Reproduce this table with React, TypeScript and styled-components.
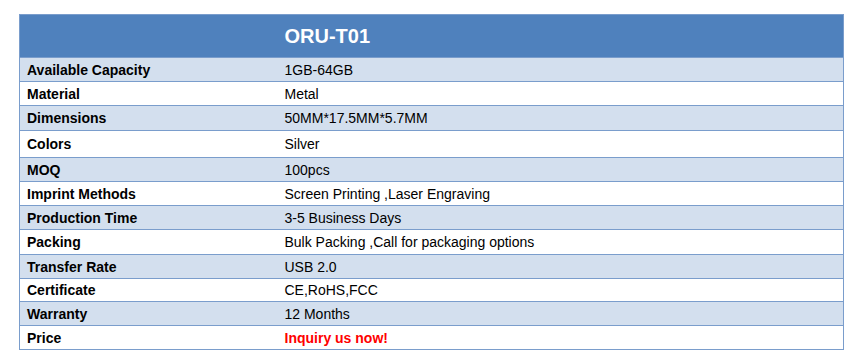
import React from 'react';
import styled, { createGlobalStyle } from 'styled-components';

const GlobalStyle = createGlobalStyle`
  body {
    margin: 0;
    background: #ffffff;
    font-family: "Liberation Sans", Arial, sans-serif;
  }
`;

const Page = styled.div`
  padding: 14px 0 0 19px;
`;

const SpecTable = styled.table`
  width: 825px;
  border-collapse: collapse;
  table-layout: fixed;
  font-size: 14px;
  color: #000;
`;

const HeadRow = styled.tr`
  background: #4f81bd;
  height: 43px;
`;

const HeadCell = styled.th`
  border: 1px solid #7a9dcc;
  padding: 0 7px;
  text-align: left;
  color: #ffffff;
  font-size: 20px;
  font-weight: bold;
  vertical-align: middle;
  &:first-child {
    border-right: none;
  }
  &:last-child {
    border-left: none;
  }
`;

const Row = styled.tr<{ $shaded: boolean; $h: number }>`
  background: ${p => (p.$shaded ? '#d3dfee' : '#ffffff')};
  height: ${p => p.$h}px;
`;

const Label = styled.td`
  border: 1px solid #7a9dcc;
  border-right: none;
  padding: 0 7px;
  font-weight: bold;
  vertical-align: middle;
  white-space: nowrap;
`;

const Value = styled.td<{ $alert?: boolean }>`
  border: 1px solid #7a9dcc;
  border-left: none;
  padding: 0 7px;
  vertical-align: middle;
  white-space: pre;
  color: ${p => (p.$alert ? '#ff0000' : '#000')};
  font-weight: ${p => (p.$alert ? 'bold' : 'normal')};
`;

const specs: { label: string; value: string; h: number; alert?: boolean }[] = [
  { label: 'Available Capacity', value: '1GB-64GB', h: 24 },
  { label: 'Material', value: 'Metal', h: 24 },
  { label: 'Dimensions', value: '50MM*17.5MM*5.7MM', h: 25 },
  { label: 'Colors', value: 'Silver', h: 27 },
  { label: 'MOQ', value: '100pcs', h: 24 },
  { label: 'Imprint Methods', value: 'Screen Printing ,Laser Engraving', h: 24 },
  { label: 'Production Time', value: '3-5 Business Days', h: 24 },
  { label: 'Packing', value: 'Bulk Packing ,Call for packaging options', h: 25 },
  { label: 'Transfer Rate', value: 'USB 2.0', h: 24 },
  { label: 'Certificate', value: 'CE,RoHS,FCC', h: 23 },
  { label: 'Warranty', value: '12 Months', h: 24 },
  { label: 'Price', value: 'Inquiry us now!', h: 24, alert: true },
];

export default function App() {
  return (
    <Page>
      <GlobalStyle />
      <SpecTable>
        <colgroup>
          <col style={{ width: 258 }} />
          <col />
        </colgroup>
        <thead>
          <HeadRow>
            <HeadCell />
            <HeadCell>ORU-T01</HeadCell>
          </HeadRow>
        </thead>
        <tbody>
          {specs.map((s, i) => (
            <Row key={s.label} $shaded={i % 2 === 0} $h={s.h}>
              <Label>{s.label}</Label>
              <Value $alert={s.alert}>{s.value}</Value>
            </Row>
          ))}
        </tbody>
      </SpecTable>
    </Page>
  );
}
